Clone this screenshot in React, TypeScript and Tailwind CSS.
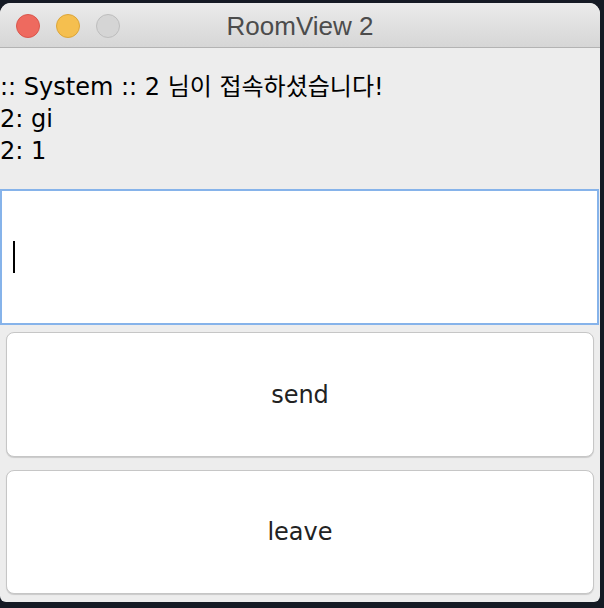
export default function App() {
  return (
    <div className="w-[604px] h-[608px] bg-[#151a24] pt-[3px] overflow-hidden">
      <div className="w-[600px] h-[599px] rounded-t-[11px] rounded-b-[6px] overflow-hidden bg-[#ededed] flex flex-col">
        {/* title bar */}
        <div className="relative h-[45px] shrink-0 bg-gradient-to-b from-[#ebebeb] to-[#d6d6d6] border-b border-[#b3b3b3] flex items-center justify-center">
          <div className="absolute left-[16px] top-[11px] flex gap-[16px]">
            <span className="w-[24px] h-[24px] rounded-full bg-[#ee6a5f] border border-[#d9574d]" />
            <span className="w-[24px] h-[24px] rounded-full bg-[#f5bf4f] border border-[#dba53a]" />
            <span className="w-[24px] h-[24px] rounded-full bg-[#d5d5d5] border border-[#bdbdbd]" />
          </div>
          <span className="text-[26px] leading-[30px] text-[#4c4c4c] pt-[2px]" style={{ fontFamily: '"Liberation Sans", "Noto Sans", sans-serif' }}>
            RoomView 2
          </span>
        </div>

        {/* messages */}
        <div
          className="h-[141px] shrink-0 pt-[23px] text-[24px] leading-[32px] text-black"
          style={{ fontFamily: '"DejaVu Sans", "Noto Sans CJK KR", sans-serif' }}
        >
          <div>:: System :: 2 님이 접속하셨습니다!</div>
          <div>2: gi</div>
          <div>2: 1</div>
        </div>

        {/* input */}
        <div className="h-[136px] shrink-0 w-[599px] bg-white border-2 border-[#86b3ea] flex items-center pl-[11px]">
          <span className="w-[2px] h-[32px] bg-black" />
        </div>

        {/* buttons */}
        <div
          className="flex flex-col gap-[13px] px-[6px] pt-[7px] text-[24px] text-[#222]"
          style={{ fontFamily: '"DejaVu Sans", "Noto Sans", sans-serif' }}
        >
          <button className="h-[125px] w-full bg-white rounded-[8px] border border-[#c6c6c6] shadow-[0_1px_1px_rgba(0,0,0,0.15)]">
            send
          </button>
          <button className="h-[124px] w-full bg-white rounded-[8px] border border-[#c6c6c6] shadow-[0_1px_1px_rgba(0,0,0,0.15)]">
            leave
          </button>
        </div>
      </div>
    </div>
  )
}
